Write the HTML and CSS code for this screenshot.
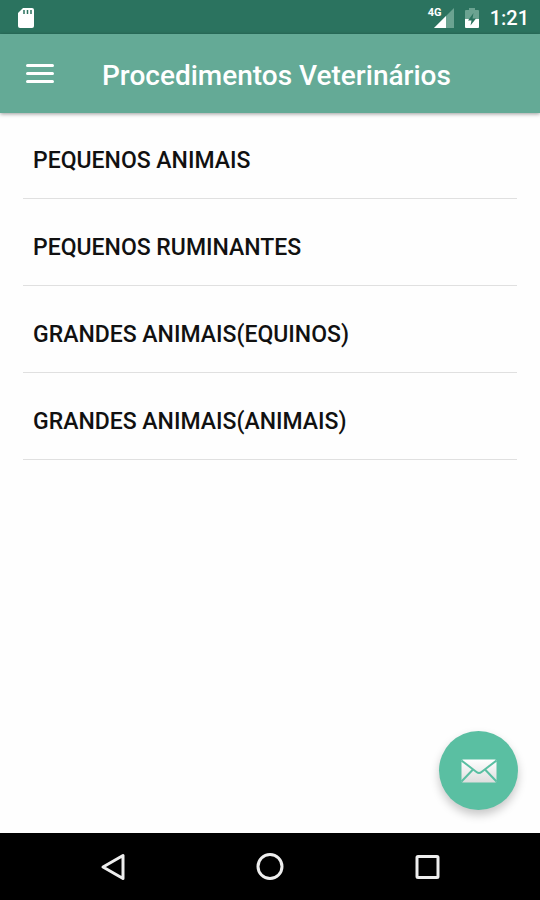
FILE: index.html
```html
<!DOCTYPE html>
<html lang="pt-BR">
<head>
    <meta charset="UTF-8">
    <meta name="viewport" content="width=device-width, initial-scale=1">
    <title>Procedimentos Veterinários</title>
    <link rel="stylesheet" href="styles.css">
</head>
<body>
    <div class="status-bar">
        <svg class="sd-card" width="18" height="22" viewBox="0 0 18 22">
            <path d="M6 1H15Q17 1 17 3V19Q17 21 15 21H3Q1 21 1 19V6Z" fill="#fff"/>
            <path d="M7 3v4M10.500 3v4M14 3v4" stroke="#2b735f" stroke-width="1.500"/>
        </svg>
        <div class="status-icons">
            <div class="signal">
                <span class="network">4G</span>
                <svg width="20" height="20" viewBox="0 0 20 20">
                    <path d="M0 20L20 0V20Z" fill="#6ba391"/>
                    <path d="M0 20L12 8V20Z" fill="#fff"/>
                </svg>
            </div>
            <svg class="battery" width="14" height="20" viewBox="0 0 14 20">
                <path d="M4 2V0H10V2H13Q14 2 14 3V11H0V3Q0 2 1 2Z" fill="#6ba391"/>
                <path d="M0 11H14V19Q14 20 13 20H1Q0 20 0 19Z" fill="#fff"/>
                <path d="M8.500 5L3 12.500H6.500L5.500 17.500L11 10.500H7.500Z" fill="#2b735f"/>
            </svg>
            <span class="clock">1:21</span>
        </div>
    </div>

    <header class="app-bar">
        <button class="menu-btn" type="button" aria-label="Menu">
            <svg width="28" height="20" viewBox="0 0 28 20">
                <path d="M1.500 1.500H26.500M1.500 9.500H26.500M1.500 17.500H26.500" stroke="#fff" stroke-width="3" stroke-linecap="round"/>
            </svg>
        </button>
        <h1>Procedimentos Veterinários</h1>
    </header>

    <main>
        <ul class="category-list">
            <li><a href="#pequenos-animais">PEQUENOS ANIMAIS</a></li>
            <li><a href="#pequenos-ruminantes">PEQUENOS RUMINANTES</a></li>
            <li><a href="#equinos">GRANDES ANIMAIS(EQUINOS)</a></li>
            <li><a href="#animais">GRANDES ANIMAIS(ANIMAIS)</a></li>
        </ul>
        <button class="fab" type="button" aria-label="Enviar e-mail">
            <svg width="36" height="24" viewBox="0 0 36 24">
                <defs>
                    <linearGradient id="paper" x1="0" y1="0" x2="0" y2="1">
                        <stop offset="0" stop-color="#fff"/>
                        <stop offset="1" stop-color="#dedede"/>
                    </linearGradient>
                </defs>
                <rect x="0.500" y="0.500" width="35" height="23" rx="1.500" fill="url(#paper)"/>
                <path d="M0.500 1.500L15.500 13Q18 15 20.500 13L35.500 1.500M0.500 22.500L12 10.500M35.500 22.500L24 10.500" fill="none" stroke="#5abfa2" stroke-width="2"/>
            </svg>
        </button>
    </main>

    <nav class="nav-bar">
        <button type="button" aria-label="Voltar">
            <svg width="28" height="28" viewBox="0 0 28 28">
                <path d="M24 2.500V25.500L4 14Z"/>
            </svg>
        </button>
        <button type="button" aria-label="Início">
            <svg width="28" height="28" viewBox="0 0 28 28">
                <circle cx="14" cy="13.500" r="12"/>
            </svg>
        </button>
        <button type="button" aria-label="Recentes">
            <svg width="28" height="28" viewBox="0 0 28 28">
                <rect x="4" y="3.500" width="21" height="21" rx="1"/>
            </svg>
        </button>
    </nav>
</body>
</html>
```
FILE: styles.css
```css
* {
    box-sizing: border-box;
}
body {
    display: flex;
    flex-direction: column;
    min-height: 100vh;
    margin: 0;
    font-family: Roboto, "Liberation Sans", sans-serif;
    background-color: #fefefe;
    color: #111;
}
button {
    display: flex;
    align-items: center;
    justify-content: center;
    padding: 0;
    border: none;
    background: none;
    cursor: pointer;
}
svg {
    display: block;
}
.status-bar {
    display: flex;
    align-items: center;
    justify-content: space-between;
    height: 34px;
    padding: 1px 11px 0 17px;
    background-color: #2b735f;
    color: #fff;
}
.status-icons {
    display: flex;
    align-items: center;
    gap: 11px;
}
.signal {
    position: relative;
    padding-left: 6px;
}
.network {
    position: absolute;
    top: 0;
    left: 0;
    font-size: 11px;
    line-height: 10px;
    font-weight: bold;
}
.clock {
    font-size: 20px;
    line-height: 24px;
    font-weight: 500;
}
.app-bar {
    position: relative;
    display: flex;
    align-items: center;
    gap: 48px;
    height: 79px;
    padding: 0 26px;
    background-color: #64aa96;
    color: #fff;
    box-shadow: 0 1px 4px rgba(0, 0, 0, 0.4);
}
h1 {
    margin: 4px 0 0;
    font-size: 28px;
    line-height: 32px;
    font-weight: 500;
}
main {
    position: relative;
    flex: 1;
    padding: 0 23px;
}
.category-list {
    display: flex;
    flex-direction: column;
    gap: 1px;
    margin: 0;
    padding: 0;
    list-style: none;
}
.category-list a {
    display: flex;
    align-items: center;
    height: 86px;
    padding: 11px 10px 0;
    border-bottom: 1px solid #e0e0e0;
    color: inherit;
    font-size: 23px;
    line-height: 26px;
    font-weight: 500;
    text-decoration: none;
}
.fab {
    position: absolute;
    right: 22px;
    bottom: 23px;
    width: 79px;
    height: 79px;
    border-radius: 50%;
    background-color: #5abfa2;
    box-shadow: 0 5px 10px rgba(0, 0, 0, 0.22);
}
.nav-bar {
    display: flex;
    justify-content: center;
    gap: 129px;
    height: 67px;
    background-color: #000;
}
.nav-bar svg {
    fill: none;
    stroke: #eee;
    stroke-width: 3;
    stroke-linejoin: round;
}
```
